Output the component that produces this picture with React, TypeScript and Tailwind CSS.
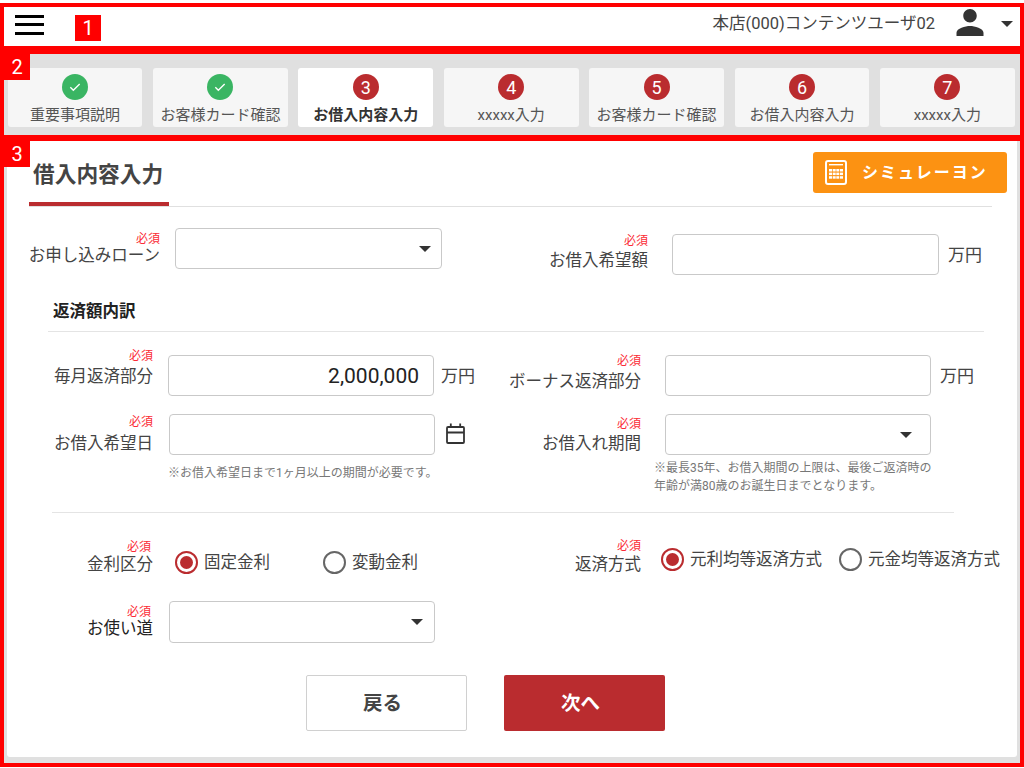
import React from "react";

const Req = ({ cls = "" }: { cls?: string }) => (
  <span className={`text-[12px] leading-[14px] text-[#fb2b35] ${cls}`}>必須</span>
);

function Label({ text, box, reqCls = "", textCls }: { text: string; box: string; reqCls?: string; textCls: string }) {
  return (
    <div className={`flex shrink-0 flex-col items-end whitespace-nowrap ${box}`}>
      <Req cls={reqCls} />
      <span className={`text-[16.5px] leading-[20px] ${textCls}`}>{text}</span>
    </div>
  );
}

const Caret = ({ cls = "" }: { cls?: string }) => (
  <svg viewBox="0 0 12 6" className={`h-[6px] w-[12px] fill-[#333] ${cls}`}>
    <path d="M0 0h12L6 6z" />
  </svg>
);

function Select({ cls, pad }: { cls: string; pad: string }) {
  return (
    <div className={`flex h-[41px] shrink-0 items-center justify-end rounded-[4px] border border-[#c9c9c9] bg-white ${pad} ${cls}`}>
      <Caret />
    </div>
  );
}

function Input({ cls, value = "" }: { cls: string; value?: string }) {
  return (
    <input
      readOnly
      value={value}
      className={`h-[41px] shrink-0 rounded-[4px] border border-[#c9c9c9] bg-white pr-[14px] text-right text-[21px] text-[#222] outline-none ${cls}`}
    />
  );
}

const Unit = ({ cls }: { cls: string }) => (
  <span className={`flex h-[41px] shrink-0 items-center whitespace-nowrap pt-[2px] text-[17px] text-[#444] ${cls}`}>万円</span>
);

function Radio({ on, label, cls }: { on?: boolean; label: string; cls: string }) {
  return (
    <div className={`flex h-[23px] shrink-0 items-center gap-[6px] ${cls}`}>
      <span
        className={`flex h-[23px] w-[23px] shrink-0 items-center justify-center rounded-full border-[2.5px] bg-white ${
          on ? "border-[#ba2c2f]" : "border-[#666]"
        }`}
      >
        {on && <span className="h-[13px] w-[13px] rounded-full bg-[#ba2c2f]" />}
      </span>
      <span className="whitespace-nowrap text-[16.5px] leading-[23px] text-[#444]">{label}</span>
    </div>
  );
}

const steps = [
  { n: "check", t: "重要事項説明" },
  { n: "check", t: "お客様カード確認" },
  { n: "3", t: "お借入内容入力", active: true },
  { n: "4", t: "xxxxx入力" },
  { n: "5", t: "お客様カード確認" },
  { n: "6", t: "お借入内容入力" },
  { n: "7", t: "xxxxx入力" },
];

const Badge = ({ n, cls }: { n: string; cls: string }) => (
  <span className={`absolute z-10 flex h-[26px] w-[26px] items-center justify-center bg-[#ff0000] text-[20px] text-white ${cls}`}>{n}</span>
);

export default function App() {
  return (
    <div className="relative flex h-[768px] w-[1024px] flex-col overflow-hidden bg-white pb-px pt-[3px] font-['Roboto','Noto_Sans_CJK_JP',sans-serif] text-[#444]">
      {/* header */}
      <header className="flex h-[47px] shrink-0 items-center border-4 border-[#ff0000] bg-white pl-[11px] pr-[7px]">
        <div className="mb-[4px] flex w-[29px] flex-col gap-[5.5px]">
          <span className="h-[3px] bg-black" />
          <span className="h-[3px] bg-black" />
          <span className="h-[3px] bg-black" />
        </div>
        <Badge n="1" cls="left-[75px] top-[15px]" />
        <span className="mb-[4px] ml-auto whitespace-nowrap text-[16.5px] text-[#444]">本店(000)コンテンツユーザ02</span>
        <svg viewBox="4 4 16 16" className="mb-[8px] ml-[21px] h-[27px] w-[28px] fill-[#333]">
          <path d="M12 12c2.21 0 4-1.79 4-4s-1.79-4-4-4-4 1.79-4 4 1.79 4 4 4zm0 2c-2.67 0-8 1.34-8 4v2h16v-2c0-2.66-5.33-4-8-4z" />
        </svg>
        <Caret cls="mb-[5px] ml-[17px]" />
      </header>

      {/* steps */}
      <nav className="grid h-[91px] shrink-0 grid-cols-7 gap-x-[10.68px] border-x-4 border-b-[6px] border-t-4 border-[#ff0000] bg-[#e0e0e0] pb-[8px] pl-[3.7px] pr-[5.3px] pt-[14px]">
        <Badge n="2" cls="left-[4px] top-[54px]" />
        {steps.map((s, i) => (
          <div
            key={i}
            className={`flex flex-col items-center rounded-[3px] pt-[6px] ${s.active ? "bg-white" : "bg-[#f6f6f6]"}`}
          >
            {s.n === "check" ? (
              <span className="flex h-[26px] w-[26px] items-center justify-center rounded-full bg-[#3ab563]">
                <svg viewBox="0 0 24 24" className="h-[16px] w-[16px] fill-none stroke-white stroke-[2]">
                  <path d="M5 12.5l4.5 4.5L19 7.5" />
                </svg>
              </span>
            ) : (
              <span className="flex h-[26px] w-[26px] items-center justify-center rounded-full bg-[#ba2c2f] text-[18px] text-white">{s.n}</span>
            )}
            <span className={`mt-[4px] whitespace-nowrap text-[15px] leading-[22px] ${s.active ? "font-bold text-[#333]" : "text-[#555]"}`}>{s.t}</span>
          </div>
        ))}
      </nav>

      {/* main */}
      <main className="flex min-h-0 flex-1 border-x-4 border-b-4 border-[#ff0000] bg-[#e0e0e0] pb-[6px] pl-[3px] pr-[3px]">
        <Badge n="3" cls="left-[4px] top-[141px]" />
        <div className="flex-1 rounded-b-[3px] bg-white pt-[11px]">
          {/* title */}
          <div className="ml-[22px] w-[963px] border-b border-[#e0e0e0]">
            <div className="flex h-[50px] items-start justify-between">
              <h1 className="pl-[4px] text-[21.7px] font-bold leading-[46px] text-[#444]">借入内容入力</h1>
              <button className="-mr-[15px] flex h-[41px] w-[194px] items-center rounded-[3px] bg-[#fc9212] pl-[12px] text-white">
                <svg viewBox="0 0 22 25" className="h-[25px] w-[22px]">
                  <rect x="1" y="1" width="20" height="23" rx="2" fill="none" stroke="#fff" strokeWidth="2" />
                  <rect x="4" y="4" width="14" height="1.4" fill="#fff" />
                  <g fill="#fff">
                    <rect x="4" y="9" width="3" height="2.5" /><rect x="7.7" y="9" width="3" height="2.5" /><rect x="11.3" y="9" width="3" height="2.5" /><rect x="15" y="9" width="3" height="2.5" />
                    <rect x="4" y="12.6" width="3" height="2.5" /><rect x="7.7" y="12.6" width="3" height="2.5" /><rect x="11.3" y="12.6" width="3" height="2.5" /><rect x="15" y="12.6" width="3" height="2.5" />
                    <rect x="4" y="16.2" width="3" height="2.5" /><rect x="7.7" y="16.2" width="3" height="2.5" /><rect x="11.3" y="16.2" width="3" height="2.5" /><rect x="15" y="16.2" width="3" height="2.5" />
                  </g>
                </svg>
                <span className="ml-[15px] whitespace-nowrap text-[16px] font-bold tracking-[2px]">シミュレーヨン</span>
              </button>
            </div>
            <div className="h-[4px] w-[140px] bg-[#ba2c2f]" />
          </div>

          {/* row 1 */}
          <div className="mt-[21px] flex h-[47px] items-start">
            <Label text="お申し込みローン" box="mt-[4px] w-[153px]" textCls="" />
            <Select cls="ml-[15px] w-[267px]" pad="pr-[10px]" />
            <Label text="お借入希望額" box="mt-[6px] w-[206px]" textCls="mt-[3px]" />
            <Input cls="ml-[24px] mt-[6px] w-[267px]" />
            <Unit cls="ml-[9px] mt-[6px]" />
          </div>

          {/* breakdown */}
          <h2 className="ml-[46px] mt-[27px] text-[16.5px] font-bold leading-[20px] text-[#222]">返済額内訳</h2>
          <div className="ml-[41px] mt-[9px] h-px w-[936px] bg-[#e4e4e4]" />

          {/* row 2 */}
          <div className="mt-[23px] flex h-[41px] items-start">
            <Label text="毎月返済部分" box="-mt-[6px] w-[146px]" textCls="mt-[4px]" />
            <Input cls="ml-[15px] w-[266px]" value="2,000,000" />
            <Unit cls="ml-[7px] w-[34px]" />
            <Label text="ボーナス返済部分" box="-mt-[1px] w-[166px]" textCls="mt-[4px]" />
            <Input cls="ml-[24px] w-[266px]" />
            <Unit cls="ml-[9px]" />
          </div>

          {/* row 3 */}
          <div className="mt-[18px] flex h-[81px] items-start">
            <Label text="お借入希望日" box="mt-px w-[146px]" textCls="mt-[5px]" />
            <div className="ml-[16px] w-[266px] shrink-0">
              <Input cls="w-[266px]" />
              <p className="-ml-px mt-[10px] whitespace-nowrap text-[12px] leading-[17px] text-[#777]">※お借入希望日まで1ヶ月以上の期間が必要です。</p>
            </div>
            <svg viewBox="0 0 19 21" className="ml-[11px] mt-[9px] h-[21px] w-[19px] shrink-0 fill-none stroke-[#333] stroke-[1.8]">
              <rect x="1" y="4" width="17" height="16" rx="1" />
              <path d="M1 9.5h17M4.8 0.5v4M14.2 0.5v4" />
            </svg>
            <Label text="お借入れ期間" box="mt-[3px] w-[176px]" textCls="mt-[3px]" />
            <div className="ml-[24px] w-[266px] shrink-0">
              <Select cls="w-[266px]" pad="pr-[18px]" />
              <p className="-ml-[11px] mt-[4px] w-[290px] text-[12px] leading-[18px] text-[#777]">
                ※最長35年、お借入期間の上限は、最後ご返済時の
                <br />
                年齢が満80歳のお誕生日までとなります。
              </p>
            </div>
          </div>

          <div className="ml-[45px] mt-[17px] h-px w-[902px] bg-[#e4e4e4]" />

          {/* row 4 */}
          <div className="mt-[26px] flex h-[40px] items-start">
            <Label text="金利区分" box="mt-px w-[146px]" reqCls="pr-[2px]" textCls="mt-px" />
            <Radio on label="固定金利" cls="ml-[22px] mt-[12px] w-[148px]" />
            <Radio label="変動金利" cls="mt-[12px] w-[94px]" />
            <Label text="返済方式" box="w-[224px]" textCls="mt-[2px]" />
            <Radio on label="元利均等返済方式" cls="ml-[20px] mt-[9px] w-[178px]" />
            <Radio label="元金均等返済方式" cls="mt-[9px]" />
          </div>

          {/* row 5 */}
          <div className="mt-[22px] flex h-[42px] items-start">
            <Label text="お使い道" box="mt-[4px] w-[146px]" reqCls="pr-[2px]" textCls="text-[#222]" />
            <Select cls="ml-[16px] h-[42px] w-[266px]" pad="pr-[11px]" />
          </div>

          {/* buttons */}
          <div className="ml-[299px] mt-[32px] flex gap-[37px]">
            <button className="h-[56px] w-[161px] rounded-[2px] border border-[#d0d0d0] bg-white pr-[8px] pt-[2px] text-[19.5px] font-bold text-[#444]">戻る</button>
            <button className="h-[56px] w-[161px] rounded-[2px] bg-[#ba2c2f] pr-[8px] pt-[2px] text-[19.5px] font-bold text-white">次へ</button>
          </div>
        </div>
      </main>
    </div>
  );
}
